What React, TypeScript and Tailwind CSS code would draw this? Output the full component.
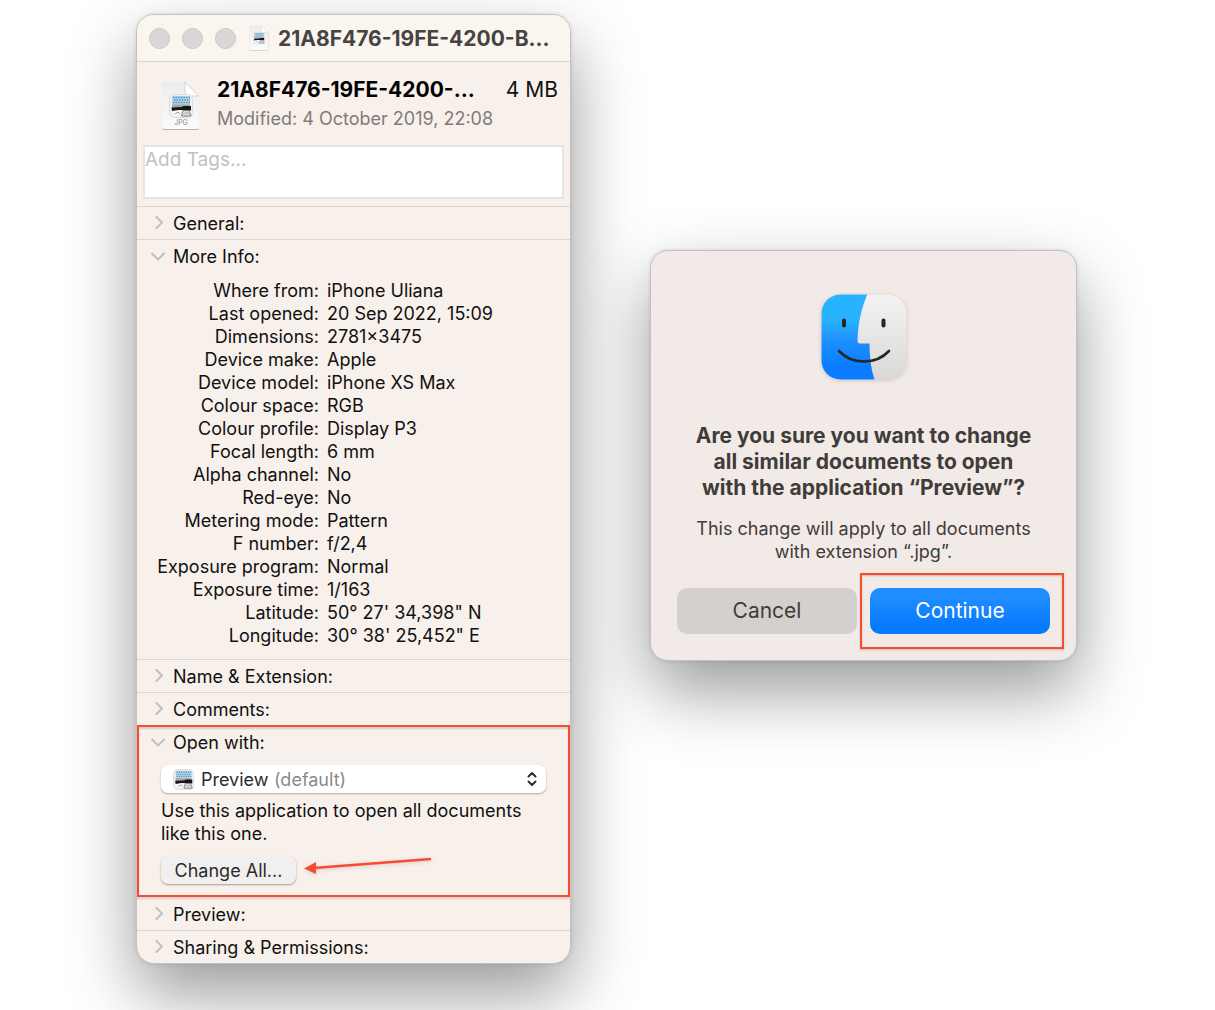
import { useState } from "react";
import type { ReactNode } from "react";

const moreInfo = [
  { label: "Where from:", value: "iPhone Uliana" },
  { label: "Last opened:", value: "20 Sep 2022, 15:09" },
  { label: "Dimensions:", value: "2781×3475" },
  { label: "Device make:", value: "Apple" },
  { label: "Device model:", value: "iPhone XS Max" },
  { label: "Colour space:", value: "RGB" },
  { label: "Colour profile:", value: "Display P3" },
  { label: "Focal length:", value: "6 mm" },
  { label: "Alpha channel:", value: "No" },
  { label: "Red-eye:", value: "No" },
  { label: "Metering mode:", value: "Pattern" },
  { label: "F number:", value: "f/2,4" },
  { label: "Exposure program:", value: "Normal" },
  { label: "Exposure time:", value: "1/163" },
  { label: "Latitude:", value: "50° 27' 34,398\" N" },
  { label: "Longitude:", value: "30° 38' 25,452\" E" },
];

// Photo strip with blue dots, a dark scanner bar and a loupe
function PreviewArt() {
  return (
    <>
      <rect x="0.5" y="0.5" width="23" height="23" rx="5" fill="#f1f1f1" stroke="#dcdcdc" />
      <rect x="3" y="2" width="18" height="9" rx="1" fill="#c9cfd3" />
      <path
        d="M4 3.5H21M5 6H21M4 8.5H21"
        stroke="#1fa3ee"
        strokeWidth="1.4"
        strokeDasharray="1.5 1.1"
      />
      <path d="M3 10.500H21V14H3Z" fill="#a3a3a3" />
      <path d="M2.5 13.5L13 13L14 12H22V16.5L12 16L3 17Z" fill="#161616" />
      <path d="M4 17L12 16V21L5 21.5Z" fill="#fafafa" />
      <path d="M6 20L9 18L11 20" stroke="#777" strokeWidth="0.8" fill="none" />
      <path d="M14 16.5H20L22 22H12.5Z" fill="#dcdcdc" stroke="#6a6a6a" strokeWidth="0.8" />
      <path d="M15.5 19H19.5" stroke="#999" strokeWidth="0.8" />
    </>
  );
}

function JpgFileIcon({ className, label }: { className?: string; label?: boolean }) {
  return (
    <svg viewBox="0 0 40 50" className={className} aria-hidden="true">
      <defs>
        <linearGradient id="paper" x1="0" y1="0" x2="0" y2="1">
          <stop offset="0" stopColor="#ececec" />
          <stop offset="1" stopColor="#fbfbfb" />
        </linearGradient>
      </defs>
      <path d="M3 2H24L38 16V47Q38 49 36 49H3Q1 49 1 47V4Q1 2 3 2Z" fill="#00000040" />
      <path d="M3 1H24L38 15V46Q38 48 36 48H3Q1 48 1 46V3Q1 1 3 1Z" fill="url(#paper)" />
      <path d="M24 1V12Q24 15 27 15H38Z" fill="#fff" stroke="#cacaca" strokeWidth="0.8" />
      <svg x="8" y="13" width="24" height="24" viewBox="0 0 24 24">
        <PreviewArt />
      </svg>
      {label && (
        <text
          x="20"
          y="44"
          textAnchor="middle"
          fontSize="7"
          fill="#8c8c8c"
          fontFamily="Inter, sans-serif"
        >
          JPG
        </text>
      )}
    </svg>
  );
}

function FinderIcon() {
  return (
    <svg viewBox="0 0 86 86" className="size-[86px] drop-shadow-sm" aria-hidden="true">
      <defs>
        <linearGradient id="finder-blue" x1="0" y1="0" x2="0" y2="1">
          <stop offset="0.3" stopColor="#27b3fd" />
          <stop offset="0.55" stopColor="#1e8fff" />
          <stop offset="0.85" stopColor="#0a7cff" />
        </linearGradient>
        <linearGradient id="finder-grey" x1="0" y1="0" x2="0" y2="1">
          <stop offset="0" stopColor="#f3f3f3" />
          <stop offset="1" stopColor="#d9d8d7" />
        </linearGradient>
        <clipPath id="finder-shape">
          <rect x="0.5" y="0.5" width="85" height="85" rx="19" />
        </clipPath>
      </defs>
      <g clipPath="url(#finder-shape)">
        <rect width="86" height="86" fill="url(#finder-grey)" />
        <path
          d="M0 0H46.500C40 15 37 30 36.500 47Q36.500 49.500 39 49.500H48.500C48.500 63 50 75 53.500 86H0Z"
          fill="url(#finder-blue)"
        />
      </g>
      <g stroke="#262626" strokeLinecap="round" fill="none">
        <path d="M23 26.500V31.500M62.500 26.500V31.500" strokeWidth="4" />
        <path d="M18 57C31 71 55 71 68 57" strokeWidth="2.600" />
      </g>
    </svg>
  );
}

function Chevron({ open }: { open: boolean }) {
  return (
    <svg viewBox="0 0 16 16" className="size-4 shrink-0" aria-hidden="true">
      <path
        d={open ? "M3 4.500L9 10.500L15 4.500" : "M7.500 1L13 6.500L7.500 12"}
        fill="none"
        stroke="#c3bfbc"
        strokeWidth="2"
        strokeLinecap="round"
        strokeLinejoin="round"
      />
    </svg>
  );
}

type SectionProps = {
  title: string;
  defaultOpen?: boolean;
  highlighted?: boolean;
  children?: ReactNode;
};

function Section({ title, defaultOpen = false, highlighted, children }: SectionProps) {
  const [open, setOpen] = useState(defaultOpen);

  return (
    <section className="relative border-t border-[#d9d6d3]">
      <button
        type="button"
        aria-expanded={open}
        onClick={() => setOpen(!open)}
        className="flex h-8 w-full items-center gap-2 px-3 pt-px text-left"
      >
        <Chevron open={open} />
        {title}
      </button>
      {open && children}
      {highlighted && (
        <div className="pointer-events-none absolute inset-x-0 -top-px bottom-0 border-2 border-[#f84b2f] shadow-[0_2px_2px_rgba(0,0,0,0.15),inset_0_2px_2px_rgba(0,0,0,0.15)]" />
      )}
    </section>
  );
}

function InfoWindow() {
  return (
    <main className="w-full max-w-[435px] overflow-hidden rounded-[18px] border border-[#c4c2c1] bg-[#f7f0eb] text-[18px] leading-[23px] text-[#111] shadow-[0_30px_68px_rgba(0,0,0,0.4),0_0_4px_rgba(0,0,0,0.12)]">
      <header className="flex h-[47px] items-center border-b border-[#d9d6d3] bg-[#faf5ee] px-3">
        <div className="flex gap-3">
          <button type="button" aria-label="Close" className="size-[21px] rounded-full border border-[#c9c7c5] bg-[#d9d8d6]" />
          <button type="button" aria-label="Minimise" className="size-[21px] rounded-full border border-[#c9c7c5] bg-[#d9d8d6]" />
          <button type="button" aria-label="Zoom" className="size-[21px] rounded-full border border-[#c9c7c5] bg-[#d9d8d6]" />
        </div>
        <JpgFileIcon className="ml-3 h-[26px] w-[22px]" />
        <h1 className="ml-2 whitespace-nowrap text-[21px] font-bold text-[#464442]">
          21A8F476-19FE-4200-B...
        </h1>
      </header>

      <div className="flex h-[83px] items-center px-3">
        <JpgFileIcon label className="mt-1 ml-3 h-[50px] w-10" />
        <div className="ml-4 flex-1">
          <div className="flex justify-between text-[21px] leading-[30px]">
            <h2 className="whitespace-nowrap font-bold text-black">21A8F476-19FE-4200-...</h2>
            <span>4 MB</span>
          </div>
          <p className="leading-7 text-[#7f7b78]">Modified: 4 October 2019, 22:08</p>
        </div>
      </div>
      <div className="px-[6px] pb-[7px]">
        <textarea
          aria-label="Tags"
          placeholder="Add Tags..."
          className="block h-[54px] w-full resize-none border-2 border-[#e6e5e4] bg-white text-[19px] leading-[26px] placeholder:text-[#c1c1c1]"
        />
      </div>

      <Section title="General:" />
      <Section title="More Info:" defaultOpen>
        <dl className="pt-[7px] pb-3">
          {moreInfo.map((row) => (
            <div key={row.label} className="grid grid-cols-[182px_1fr] gap-2">
              <dt className="text-right">{row.label}</dt>
              <dd>{row.value}</dd>
            </div>
          ))}
        </dl>
      </Section>
      <Section title="Name & Extension:" />
      <Section title="Comments:" />
      <Section title="Open with:" defaultOpen highlighted>
        <div className="px-6 pt-[7px] pb-[13px]">
          <div className="relative">
            <select
              aria-label="Open with"
              className="block h-7 w-full appearance-none rounded-[7px] bg-white pl-10 text-[#2b2b2b] shadow-[0_1px_2px_rgba(0,0,0,0.3)]"
            >
              <option>Preview</option>
            </select>
            <div className="pointer-events-none absolute inset-0 flex items-center pr-2 pl-3">
              <svg viewBox="0 0 24 24" className="size-[21px]" aria-hidden="true">
                <PreviewArt />
              </svg>
              <span className="ml-20 text-[#8a8a8a]">(default)</span>
              <svg viewBox="0 0 12 16" className="ml-auto h-4 w-3" aria-hidden="true">
                <path
                  d="M2.500 5.500L6 2L9.500 5.500M2.500 10.500L6 14L9.500 10.500"
                  fill="none"
                  stroke="#2e2e2e"
                  strokeWidth="2"
                  strokeLinecap="round"
                  strokeLinejoin="round"
                />
              </svg>
            </div>
          </div>
          <p className="mt-[6px]">Use this application to open all documents like this one.</p>
          <div className="mt-[11px] flex">
            <button
              type="button"
              className="h-7 w-[135px] rounded-[7px] bg-[#f1f0ef] text-[#2b2b2b] shadow-[0_1px_2px_rgba(0,0,0,0.35)]"
            >
              Change All...
            </button>
            <svg viewBox="0 0 128 20" className="ml-2 h-5 w-32 drop-shadow-sm" aria-hidden="true">
              <path d="M10 12L127 3" stroke="#f84b2f" strokeWidth="2.600" />
              <path d="M0 12.500L12 6V18Z" fill="#f84b2f" />
            </svg>
          </div>
        </div>
      </Section>
      <Section title="Preview:" />
      <Section title="Sharing & Permissions:" />
    </main>
  );
}

function ConfirmDialog() {
  return (
    <div
      role="alertdialog"
      aria-labelledby="confirm-title"
      aria-describedby="confirm-text"
      className="w-full rounded-[18px] border border-[#c4c2c1] bg-[#f2eae7] px-[26px] pt-[43px] pb-[26px] text-center text-[#3f3c3a] shadow-[0_30px_68px_rgba(0,0,0,0.4),0_0_4px_rgba(0,0,0,0.12)]"
    >
      <div className="flex justify-center">
        <FinderIcon />
      </div>
      <h2 id="confirm-title" className="mt-[43px] text-[21px] leading-[26px] font-bold">
        Are you sure you want to change
        <br />
        all similar documents to open
        <br />
        with the application “Preview”?
      </h2>
      <p id="confirm-text" className="mt-4 text-[18px] leading-[23px]">
        This change will apply to all documents
        <br />
        with extension “.jpg”.
      </p>
      <div className="mt-[25px] flex gap-[13px] text-[21px]">
        <button type="button" className="h-[46px] flex-1 rounded-[10px] bg-[#d4d0cd]">
          Cancel
        </button>
        <div className="relative flex-1">
          <button
            type="button"
            className="h-[46px] w-full rounded-[10px] bg-linear-to-b from-[#1f8dff] from-20% to-[#087aff] to-80% text-white"
          >
            Continue
          </button>
          <div className="pointer-events-none absolute -inset-y-[15px] -right-[14px] -left-[10px] border-2 border-[#f84b2f] shadow-[0_1px_2px_rgba(0,0,0,0.2),inset_0_1px_2px_rgba(0,0,0,0.2)]" />
        </div>
      </div>
    </div>
  );
}

export default function App() {
  return (
    <div className="flex min-h-screen items-start justify-center gap-[79px] overflow-hidden bg-white pt-[14px] pr-[2px] pb-[46px] font-['Inter',sans-serif]">
      <InfoWindow />
      <div className="flex w-full max-w-[427px] pt-[236px]">
        <ConfirmDialog />
      </div>
    </div>
  );
}
